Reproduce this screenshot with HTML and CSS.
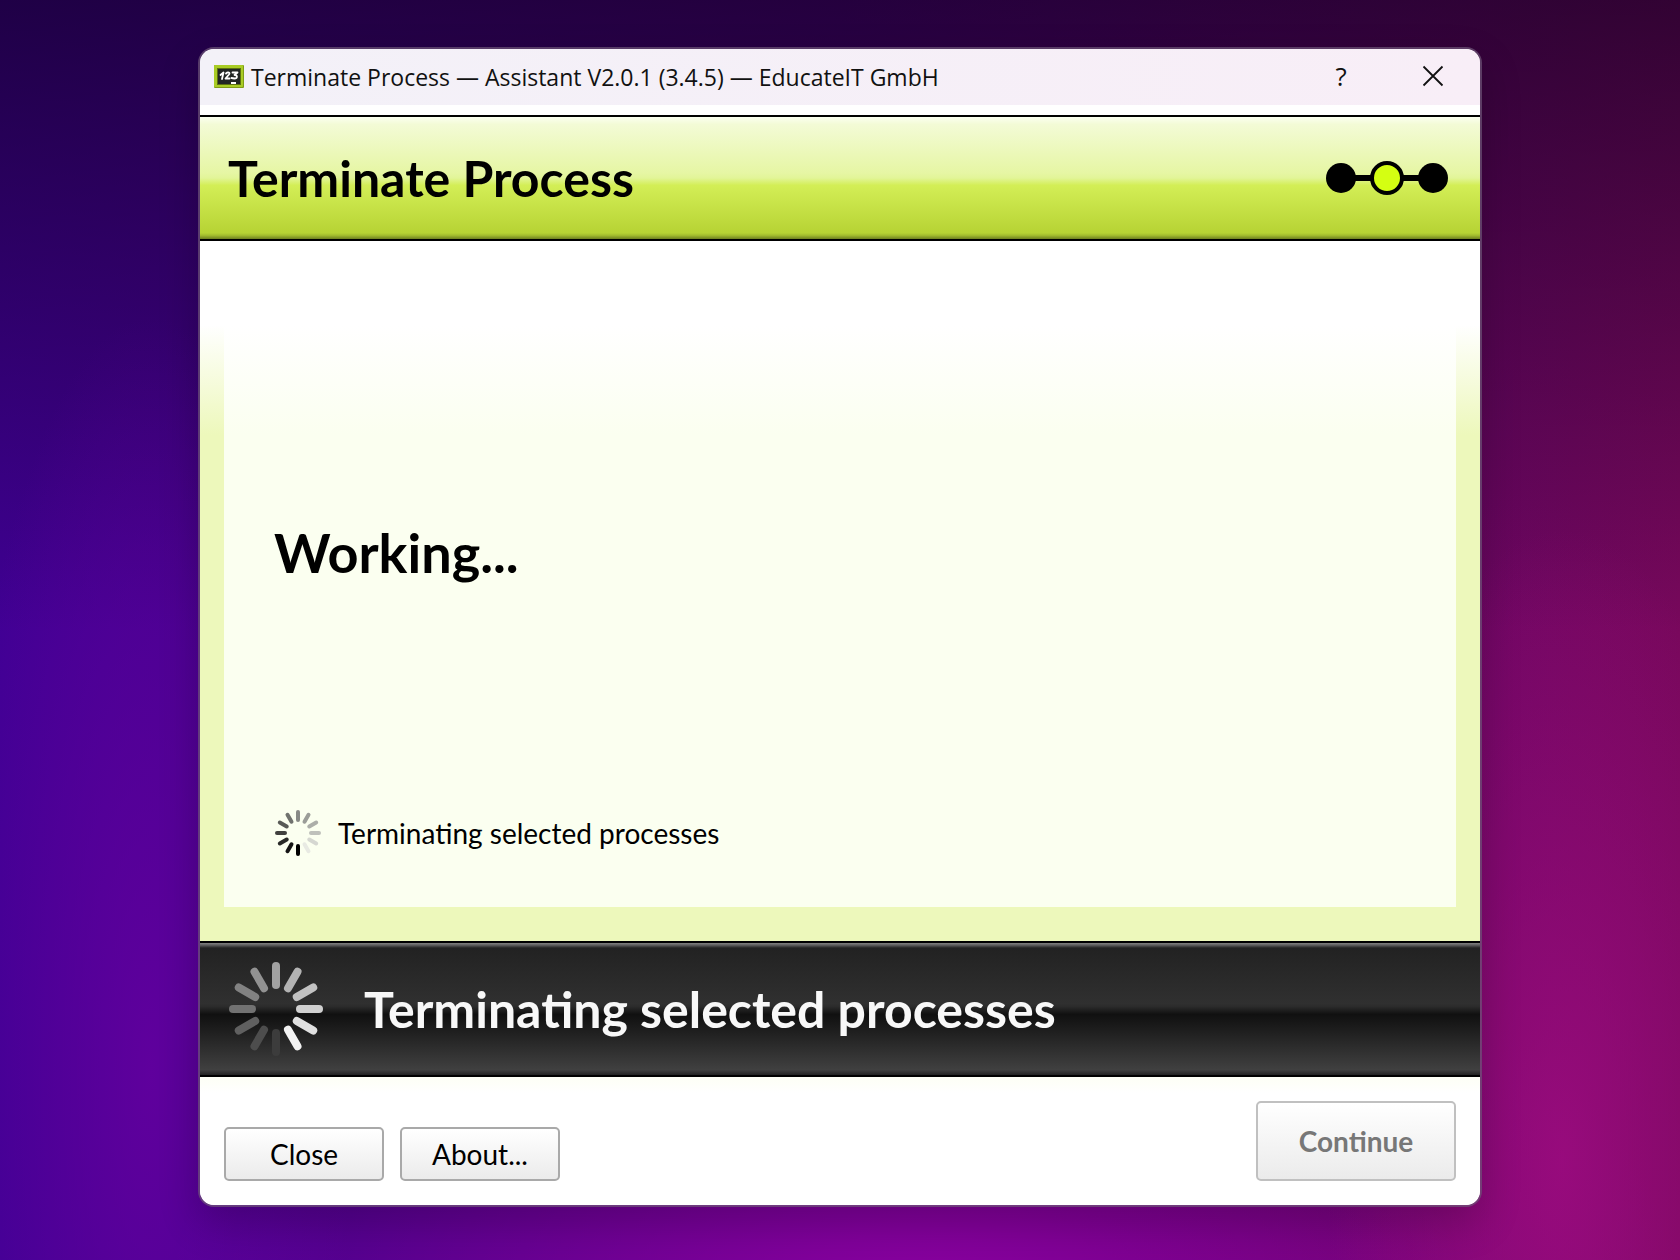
FILE: index.html
```html
<!DOCTYPE html>
<html lang="en">
<head>
<meta charset="utf-8">
<title>Terminate Process — Assistant</title>
<link rel="stylesheet" href="styles.css">
</head>
<body>
<main class="window">
  <header class="titlebar">
    <svg class="app-icon" viewBox="0 0 30 23" aria-hidden="true">
      <rect width="30" height="23" rx="1" fill="#7f9c16"/>
      <rect width="29" height="22" rx="1" fill="#a9cc25"/>
      <rect x="3" y="3" width="24" height="17" fill="#5b7010"/>
      <rect x="4" y="4" width="22" height="15" fill="#222624"/>
      <path d="M6.500 10 9.500 7.500 8 14M12 8.500C14 6.500 16.500 7.500 15 9.500L11.500 13.500H15.500M18.500 7.500H23.500L20.500 10C24 10 23.500 13.500 20.500 13.500L17.500 13" fill="none" stroke="#fff" stroke-width="1.800" stroke-linecap="round" stroke-linejoin="round"/>
      <path d="M17 18h5" stroke="#fff" stroke-width="2"/>
    </svg>
    <span class="titlebar-text">Terminate Process — Assistant V2.0.1 (3.4.5) — EducateIT GmbH</span>
    <button class="caption-button" type="button" aria-label="Help">?</button>
    <button class="caption-button" type="button" aria-label="Close window">
      <svg width="22" height="22" viewBox="0 0 22 22" aria-hidden="true"><path d="M1.500 1.500l19 19M20.500 1.500l-19 19" stroke="#111" stroke-width="1.800"/></svg>
    </button>
  </header>

  <section class="banner">
    <h1 class="banner-title">Terminate Process</h1>
    <svg class="steps" width="124" height="36" viewBox="0 0 124 36" role="img" aria-label="Step 2 of 3">
      <path d="M16 18h92" stroke="#000" stroke-width="6"/>
      <circle cx="16" cy="18" r="15"/>
      <circle cx="62" cy="18" r="15" fill="#d4ff12" stroke="#000" stroke-width="4"/>
      <circle cx="108" cy="18" r="15"/>
    </svg>
  </section>

  <section class="content">
    <div class="panel">
      <h2 class="panel-title">Working...</h2>
      <p class="task">
        <svg class="task-spinner" viewBox="-24 -24 48 48" aria-hidden="true">
          <g stroke-width="4" stroke-linecap="round">
            <path d="M0-13V-21" stroke="#888a86"/>
            <path d="M0-13V-21" stroke="#9b9d98" transform="rotate(30)"/>
            <path d="M0-13V-21" stroke="#acaea9" transform="rotate(60)"/>
            <path d="M0-13V-21" stroke="#bfc1bb" transform="rotate(90)"/>
            <path d="M0-13V-21" stroke="#d5d7d1" transform="rotate(120)"/>
            <path d="M0-13V-21" stroke="#e8eae3" transform="rotate(150)"/>
            <path d="M0-13V-21" stroke="#000" transform="rotate(180)"/>
            <path d="M0-13V-21" stroke="#141414" transform="rotate(210)"/>
            <path d="M0-13V-21" stroke="#282927" transform="rotate(240)"/>
            <path d="M0-13V-21" stroke="#40413e" transform="rotate(270)"/>
            <path d="M0-13V-21" stroke="#585a56" transform="rotate(300)"/>
            <path d="M0-13V-21" stroke="#70726e" transform="rotate(330)"/>
          </g>
        </svg>
        <span>Terminating selected processes</span>
      </p>
    </div>
  </section>

  <section class="status" role="status">
    <svg class="status-spinner" viewBox="-48 -48 96 96" aria-hidden="true">
      <g stroke-width="8" stroke-linecap="round">
        <path d="M0-24V-43" stroke="#a2a2a2"/>
        <path d="M0-24V-43" stroke="#b3b3b3" transform="rotate(30)"/>
        <path d="M0-24V-43" stroke="#c2c2c2" transform="rotate(60)"/>
        <path d="M0-24V-43" stroke="#d0d0d0" transform="rotate(90)"/>
        <path d="M0-24V-43" stroke="#e0e0e0" transform="rotate(120)"/>
        <path d="M0-24V-43" stroke="#f2f2f2" transform="rotate(150)"/>
        <path d="M0-24V-43" stroke="#3c3c3c" transform="rotate(180)"/>
        <path d="M0-24V-43" stroke="#4d4d4d" transform="rotate(210)"/>
        <path d="M0-24V-43" stroke="#606060" transform="rotate(240)"/>
        <path d="M0-24V-43" stroke="#727272" transform="rotate(270)"/>
        <path d="M0-24V-43" stroke="#828282" transform="rotate(300)"/>
        <path d="M0-24V-43" stroke="#929292" transform="rotate(330)"/>
      </g>
    </svg>
    <span class="status-text">Terminating selected processes</span>
  </section>

  <footer class="actions">
    <button class="button" type="button">Close</button>
    <button class="button" type="button">About...</button>
    <button class="button button-primary" type="button" disabled>Continue</button>
  </footer>
</main>
</body>
</html>
```
FILE: styles.css
```css
* {
  box-sizing: border-box;
}

body {
  margin: 0;
  min-height: 100vh;
  padding: 47px 198px 53px;
  display: flex;
  font-family: Lato, "Liberation Sans", sans-serif;
  color: #000;
  background:
    radial-gradient(ellipse 14% 50% at 93% 92%, rgba(160, 12, 130, 0.8), transparent),
    radial-gradient(ellipse 45% 35% at 55% 104%, rgba(145, 0, 165, 0.9), transparent),
    radial-gradient(ellipse 12% 60% at 9% 85%, rgba(102, 0, 160, 0.8), transparent),
    linear-gradient(to bottom, rgba(14, 0, 30, 0.66), transparent 50%),
    linear-gradient(to right, #400094, #50007c 50%, #78085c);
}

.window {
  flex: 1;
  display: flex;
  flex-direction: column;
  overflow: hidden;
  border: 2px solid rgba(110, 85, 120, 0.7);
  border-radius: 16px;
  background: #fff;
  background-clip: padding-box;
  box-shadow: 0 16px 40px rgba(0, 0, 0, 0.2);
}

.titlebar {
  display: flex;
  align-items: center;
  height: 56px;
  padding: 0 1px 2px 14px;
  background: linear-gradient(to right, #f3f1f8, #f8eef7);
}

.app-icon {
  width: 30px;
  height: 23px;
  margin-right: 7px;
}

.titlebar-text {
  flex: 1;
  padding-top: 2px;
  font: 23px/32px "Open Sans", "Noto Sans", sans-serif;
  color: #111;
}

.caption-button {
  width: 92px;
  height: 54px;
  padding: 0;
  display: grid;
  place-items: center;
  border: 0;
  background: none;
  font: 26px/32px "Open Sans", "Noto Sans", sans-serif;
  color: #111;
}

.banner {
  display: flex;
  align-items: center;
  justify-content: space-between;
  height: 126px;
  margin-top: 10px;
  padding: 0 31px 0 28px;
  border: solid #000;
  border-width: 2px 0;
  background: linear-gradient(to bottom, #fbfff0, #f3fbd6 6%, #e6f6a4 46%, #e2f598 50%, #d3ee56 56%, #b7d334 95%, #a3bd2e 97%, #6e8020);
}

.banner-title {
  margin: 0;
  font-size: 50px;
  line-height: 60px;
}

.content {
  flex: 1;
  display: flex;
  padding: 0 24px 34px;
  background: linear-gradient(to bottom, #fff 84px, #edf8bb 194px);
}

.panel {
  flex: 1;
  display: flex;
  flex-direction: column;
  justify-content: space-between;
  padding: 280px 50px 50px;
  background: linear-gradient(to bottom, #fff 84px, #fbfff0 194px);
}

.panel-title {
  margin: 0;
  font-size: 54px;
  line-height: 64px;
}

.task {
  display: flex;
  align-items: center;
  gap: 16px;
  margin: 0;
  font-size: 28px;
  line-height: 32px;
}

.task-spinner {
  width: 48px;
  height: 48px;
}

.status {
  display: flex;
  align-items: center;
  gap: 40px;
  height: 136px;
  padding: 0 28px;
  border: solid #000;
  border-width: 2px 0;
  color: #f8f8f8;
  background: linear-gradient(to bottom, #828282, #606060 2px, #222 5px, #303030 46%, #2c2c2c 48%, #101010 54%, #404040 96%, #222);
}

.status-spinner {
  width: 96px;
  height: 96px;
}

.status-text {
  font-size: 50px;
  line-height: 60px;
  font-weight: 700;
}

.actions {
  display: flex;
  align-items: flex-end;
  gap: 16px;
  height: 128px;
  padding: 24px;
  background: linear-gradient(to bottom, #fdfff5, #fff 16px);
}

.button {
  width: 160px;
  height: 54px;
  padding: 0;
  border: 2px solid #a9a9a9;
  border-radius: 5px;
  background: linear-gradient(to bottom, #fff, #ebebeb);
  font: 28px/32px Lato, "Liberation Sans", sans-serif;
  color: #000;
}

.button-primary {
  width: 200px;
  height: 80px;
  margin-left: auto;
  border-color: #c0c0c0;
  font-weight: 700;
  color: #777;
}
```
